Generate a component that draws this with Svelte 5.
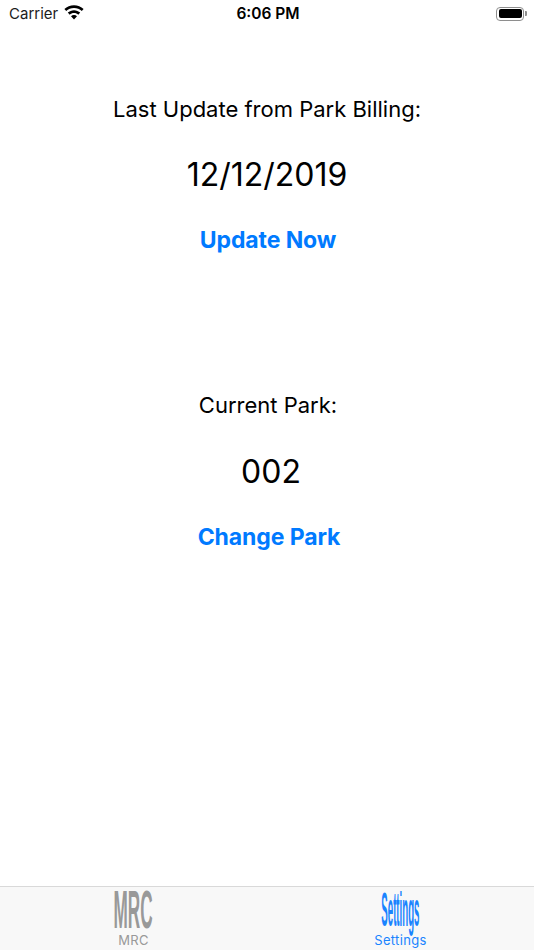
<script>
  const sections = [
    { label: 'Last Update from Park Billing:', value: '12/12/2019', action: 'Update Now', kind: 'update' },
    { label: 'Current Park:', value: '002', action: 'Change Park', kind: 'park' }
  ];
</script>

<div class="screen">
  <header class="status">
    <div class="left">
      <span class="carrier">Carrier</span>
      <svg class="wifi" width="20" height="15" viewBox="0 0 20 15" aria-hidden="true">
        <path d="M10 .3c3.700 0 7.100 1.400 9.600 3.800l-1.800 2C15.800 4.200 13 3 10 3S4.200 4.200 2.200 6.100L.4 4.100C2.900 1.700 6.300.3 10 .3z" fill="#000"/>
        <path d="M10 5.200c2.400 0 4.500.9 6.200 2.400l-1.900 2.100C13.200 8.700 11.700 8 10 8s-3.200.7-4.300 1.700L3.800 7.600C5.500 6.100 7.600 5.200 10 5.200z" fill="#000"/>
        <path d="M10 10c1.200 0 2.200.4 3 1.200L10 14.600l-3-3.400c.8-.8 1.800-1.200 3-1.200z" fill="#000"/>
      </svg>
    </div>
    <span class="time">6:06 PM</span>
    <div class="battery" aria-hidden="true">
      <span class="shell"><span class="fill"></span></span>
      <span class="nub"></span>
    </div>
  </header>

  <main class="content">
    {#each sections as s}
      <section class="block {s.kind}">
        <div class="label">{s.label}</div>
        <div class="value">{s.value}</div>
        <div class="action">{s.action}</div>
      </section>
    {/each}
  </main>

  <nav class="tabbar">
    <div class="tab mrc">
      <span class="glyph"><span>MRC</span></span>
      <span class="name">MRC</span>
    </div>
    <div class="tab settings">
      <span class="glyph"><span>Settings</span></span>
      <span class="name">Settings</span>
    </div>
  </nav>
</div>

<style>
  :global(body) {
    margin: 0;
    background: #fff;
  }
  .screen {
    width: 534px;
    height: 950px;
    display: flex;
    flex-direction: column;
    font-family: "Liberation Sans", Arial, sans-serif;
    color: #000;
    background: #fff;
    overflow: hidden;
  }
  .status {
    height: 28px;
    display: grid;
    grid-template-columns: 1fr auto 1fr;
    align-items: center;
    padding: 0 7px 1px 9px;
    box-sizing: border-box;
  }
  .left {
    display: flex;
    align-items: center;
    gap: 6px;
  }
  .carrier {
    font-family: Inter, sans-serif;
    font-size: 15px;
    color: #1c1c1c;
  }
  .wifi {
    margin-top: -3px;
  }
  .time {
    font-family: Inter, sans-serif;
    font-size: 15.500px;
    font-weight: 600;
  }
  .battery {
    justify-self: end;
    display: flex;
    align-items: center;
    gap: 1px;
  }
  .shell {
    box-sizing: border-box;
    width: 28px;
    height: 14px;
    border: 1px solid #8e8e8e;
    border-radius: 4px;
    padding: 1.500px;
    display: block;
  }
  .fill {
    display: block;
    width: 100%;
    height: 100%;
    background: #000;
    border-radius: 2px;
  }
  .nub {
    width: 2px;
    height: 5px;
    background: #8e8e8e;
    border-radius: 0 1px 1px 0;
  }
  .content {
    flex: 1;
    display: flex;
    flex-direction: column;
    gap: 136px;
    padding-top: 66px;
  }
  .block {
    display: flex;
    flex-direction: column;
    align-items: center;
  }
  .label {
    font-family: Inter, sans-serif;
    font-size: 22px;
    line-height: 30px;
  }
  .value {
    font-family: Inter, sans-serif;
    font-size: 32px;
    line-height: 40px;
    margin-top: 31px;
  }
  .action {
    font-family: Inter, sans-serif;
    font-size: 23px;
    font-weight: 700;
    line-height: 30px;
    color: #007aff;
    margin-top: 30px;
    letter-spacing: -0.100px;
  }
  .park .value { padding-left: 8px; }
  .update .action { padding-left: 2px; }
  .park .action { padding-left: 4px; }
  .park .label { padding-left: 2px; margin-top: -1px; margin-bottom: 1px; }
  .tabbar {
    height: 64px;
    box-sizing: border-box;
    border-top: 1px solid #d9d9d9;
    background: #f8f8f8;
    display: grid;
    grid-template-columns: 1fr 1fr;
  }
  .tab {
    display: flex;
    flex-direction: column;
    align-items: center;
    padding-top: 4px;
  }
  .tab.settings {
    color: #1a84ff;
  }
  .tab.mrc {
    color: #999;
  }
  .glyph {
    height: 40px;
    display: flex;
    align-items: center;
    justify-content: center;
    width: 60px;
  }
  .glyph span {
    display: block;
    font-family: "Liberation Sans", Arial, sans-serif;
    font-weight: 700;
    font-size: 22px;
    line-height: 1;
    white-space: nowrap;
  }
  .mrc .glyph span {
    transform: scale(0.78, 2.450);
  }
  .settings .glyph span {
    transform: scale(0.44, 2.150);
  }
  .name {
    font-family: Inter, sans-serif;
    font-size: 13px;
    line-height: 14px;
    margin-top: 1.500px;
    letter-spacing: 0.350px;
  }
</style>
